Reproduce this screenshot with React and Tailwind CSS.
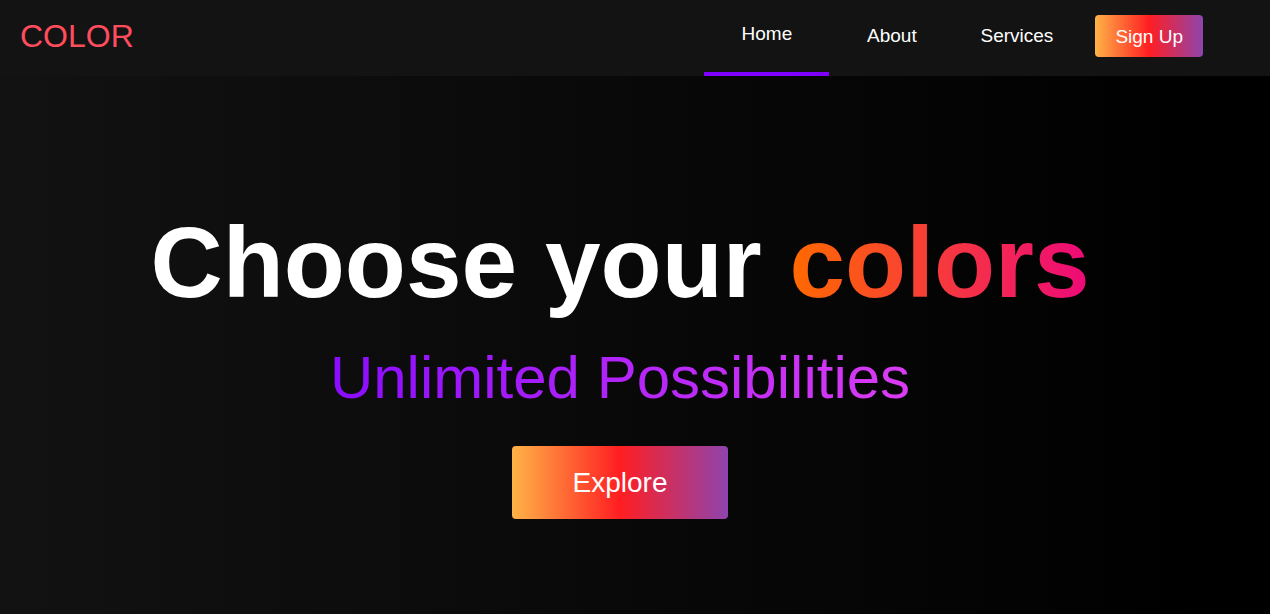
export default function App() {
  const font = { fontFamily: '"Liberation Sans", Arial, sans-serif' };
  return (
    <div className="w-full min-h-screen flex flex-col font-['Liberation_Sans',Arial,sans-serif]" style={font}>
      <nav className="h-[76px] bg-[#131313] flex items-stretch justify-between pl-[20px] pr-[67px]">
        <div className="flex items-center pb-[5px] text-[32px] leading-none text-[#ff4d5e]">COLOR</div>
        <ul className="flex items-stretch h-full">
          <li className="w-[125px] flex items-center justify-center pb-[5px] border-b-4 border-[#8000ff] text-[19px] leading-none text-white">
            Home
          </li>
          <li className="w-[125px] flex items-center justify-center pb-[6px] text-[19px] leading-none text-white">
            About
          </li>
          <li className="w-[125px] flex items-center justify-center pb-[6px] text-[19px] leading-none text-white">
            Services
          </li>
          <li className="flex items-center pb-[4px] ml-4">
            <button className="h-[42px] px-5 rounded-[4px] text-[19px] leading-none text-white bg-[linear-gradient(to_right,#ffb347,#ff1e22_50%,#8e44ad)]">
              Sign Up
            </button>
          </li>
        </ul>
      </nav>
      <main className="flex-1 h-[538px] bg-[linear-gradient(to_right,#121212,#000_95%)] flex flex-col items-center pt-[136px] pr-[30px]">
        <h1 className="text-[100px] leading-none font-bold text-white whitespace-nowrap">
          Choose your{" "}
          <span className="bg-[linear-gradient(to_right,#ff6a00,#ee0979)] bg-clip-text text-transparent">colors</span>
        </h1>
        <p className="mt-[36px] text-[60px] leading-none whitespace-nowrap bg-[linear-gradient(to_right,#8a0cff,#da3cf2)] bg-clip-text text-transparent">
          Unlimited Possibilities
        </p>
        <button className="mt-[38px] h-[73px] px-[61px] rounded-[4px] text-[28px] leading-none text-white bg-[linear-gradient(to_right,#ffb347,#ff1e22_50%,#8e44ad)]">
          Explore
        </button>
      </main>
    </div>
  );
}
